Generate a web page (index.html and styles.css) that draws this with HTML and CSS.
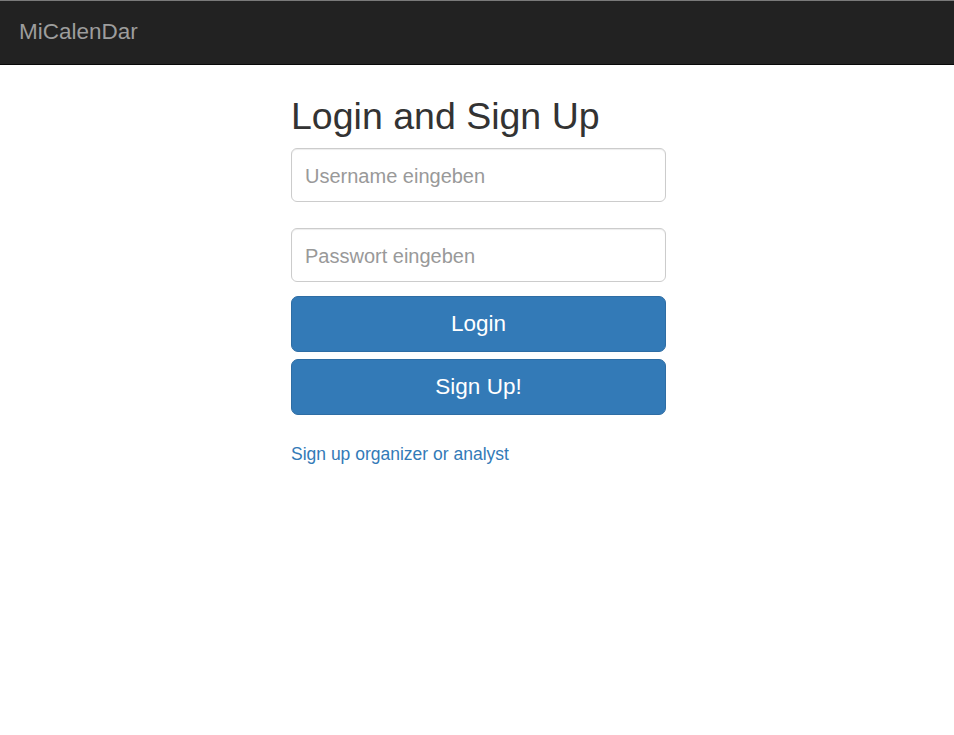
FILE: index.html
```html
<!DOCTYPE html>
<html>
<head>
<meta charset="utf-8">
<title>MiCalenDar</title>
<link rel="stylesheet" href="styles.css">
</head>
<body>
<nav class="navbar">
  <span class="brand">MiCalenDar</span>
</nav>
<main class="page">
  <form class="login">
    <h1 class="title">Login and Sign Up</h1>
    <input class="field field-user" type="text" placeholder="Username eingeben">
    <input class="field field-pass" type="password" placeholder="Passwort eingeben">
    <button class="btn btn-login" type="button">Login</button>
    <button class="btn btn-signup" type="button">Sign Up!</button>
    <a class="link" href="#">Sign up organizer or analyst</a>
  </form>
</main>
</body>
</html>
```
FILE: styles.css
```css
html, body {
  margin: 0;
  padding: 0;
  background: #fff;
}
body {
  font-family: "Liberation Sans", Arial, sans-serif;
  color: #333;
}
.navbar {
  height: 63px;
  background: #222;
  border-top: 1px solid #7a7a7a;
  border-bottom: 1px solid #080808;
  display: flex;
  align-items: center;
  padding-left: 19px;
}
.brand {
  font-size: 22.5px;
  color: #9d9d9d;
  line-height: 1;
  margin-top: 0px;
}
.page {
  display: flex;
  justify-content: center;
}
.login {
  width: 375px;
  margin-left: 3px;
  display: flex;
  flex-direction: column;
  align-items: stretch;
}
.title {
  font-size: 37.5px;
  font-weight: 500;
  line-height: 41px;
  margin: 31px 0 11px;
  color: #333;
}
.field {
  box-sizing: border-box;
  height: 54px;
  width: 100%;
  border: 1px solid #ccc;
  border-radius: 6px;
  padding: 2px 13px 0;
  font-family: "Liberation Sans", Arial, sans-serif;
  font-size: 20px;
  color: #555;
  background: #fff;
  box-shadow: inset 0 1px 1px rgba(0,0,0,.075);
  margin: 0;
  outline: none;
}
.field::placeholder {
  color: #999;
}
.field-pass {
  margin-top: 26px;
}
.btn {
  box-sizing: border-box;
  height: 56px;
  width: 100%;
  background: #337ab7;
  border: 1px solid #2e6da4;
  border-radius: 7px;
  color: #fff;
  font-family: "Liberation Sans", Arial, sans-serif;
  font-size: 22.5px;
  padding: 0;
  margin: 0;
}
.btn-login {
  margin-top: 14px;
}
.btn-signup {
  margin-top: 7px;
}
.link {
  margin-top: 27px;
  font-size: 17.5px;
  color: #337ab7;
  text-decoration: none;
  line-height: 1.4;
  align-self: flex-start;
}
```
